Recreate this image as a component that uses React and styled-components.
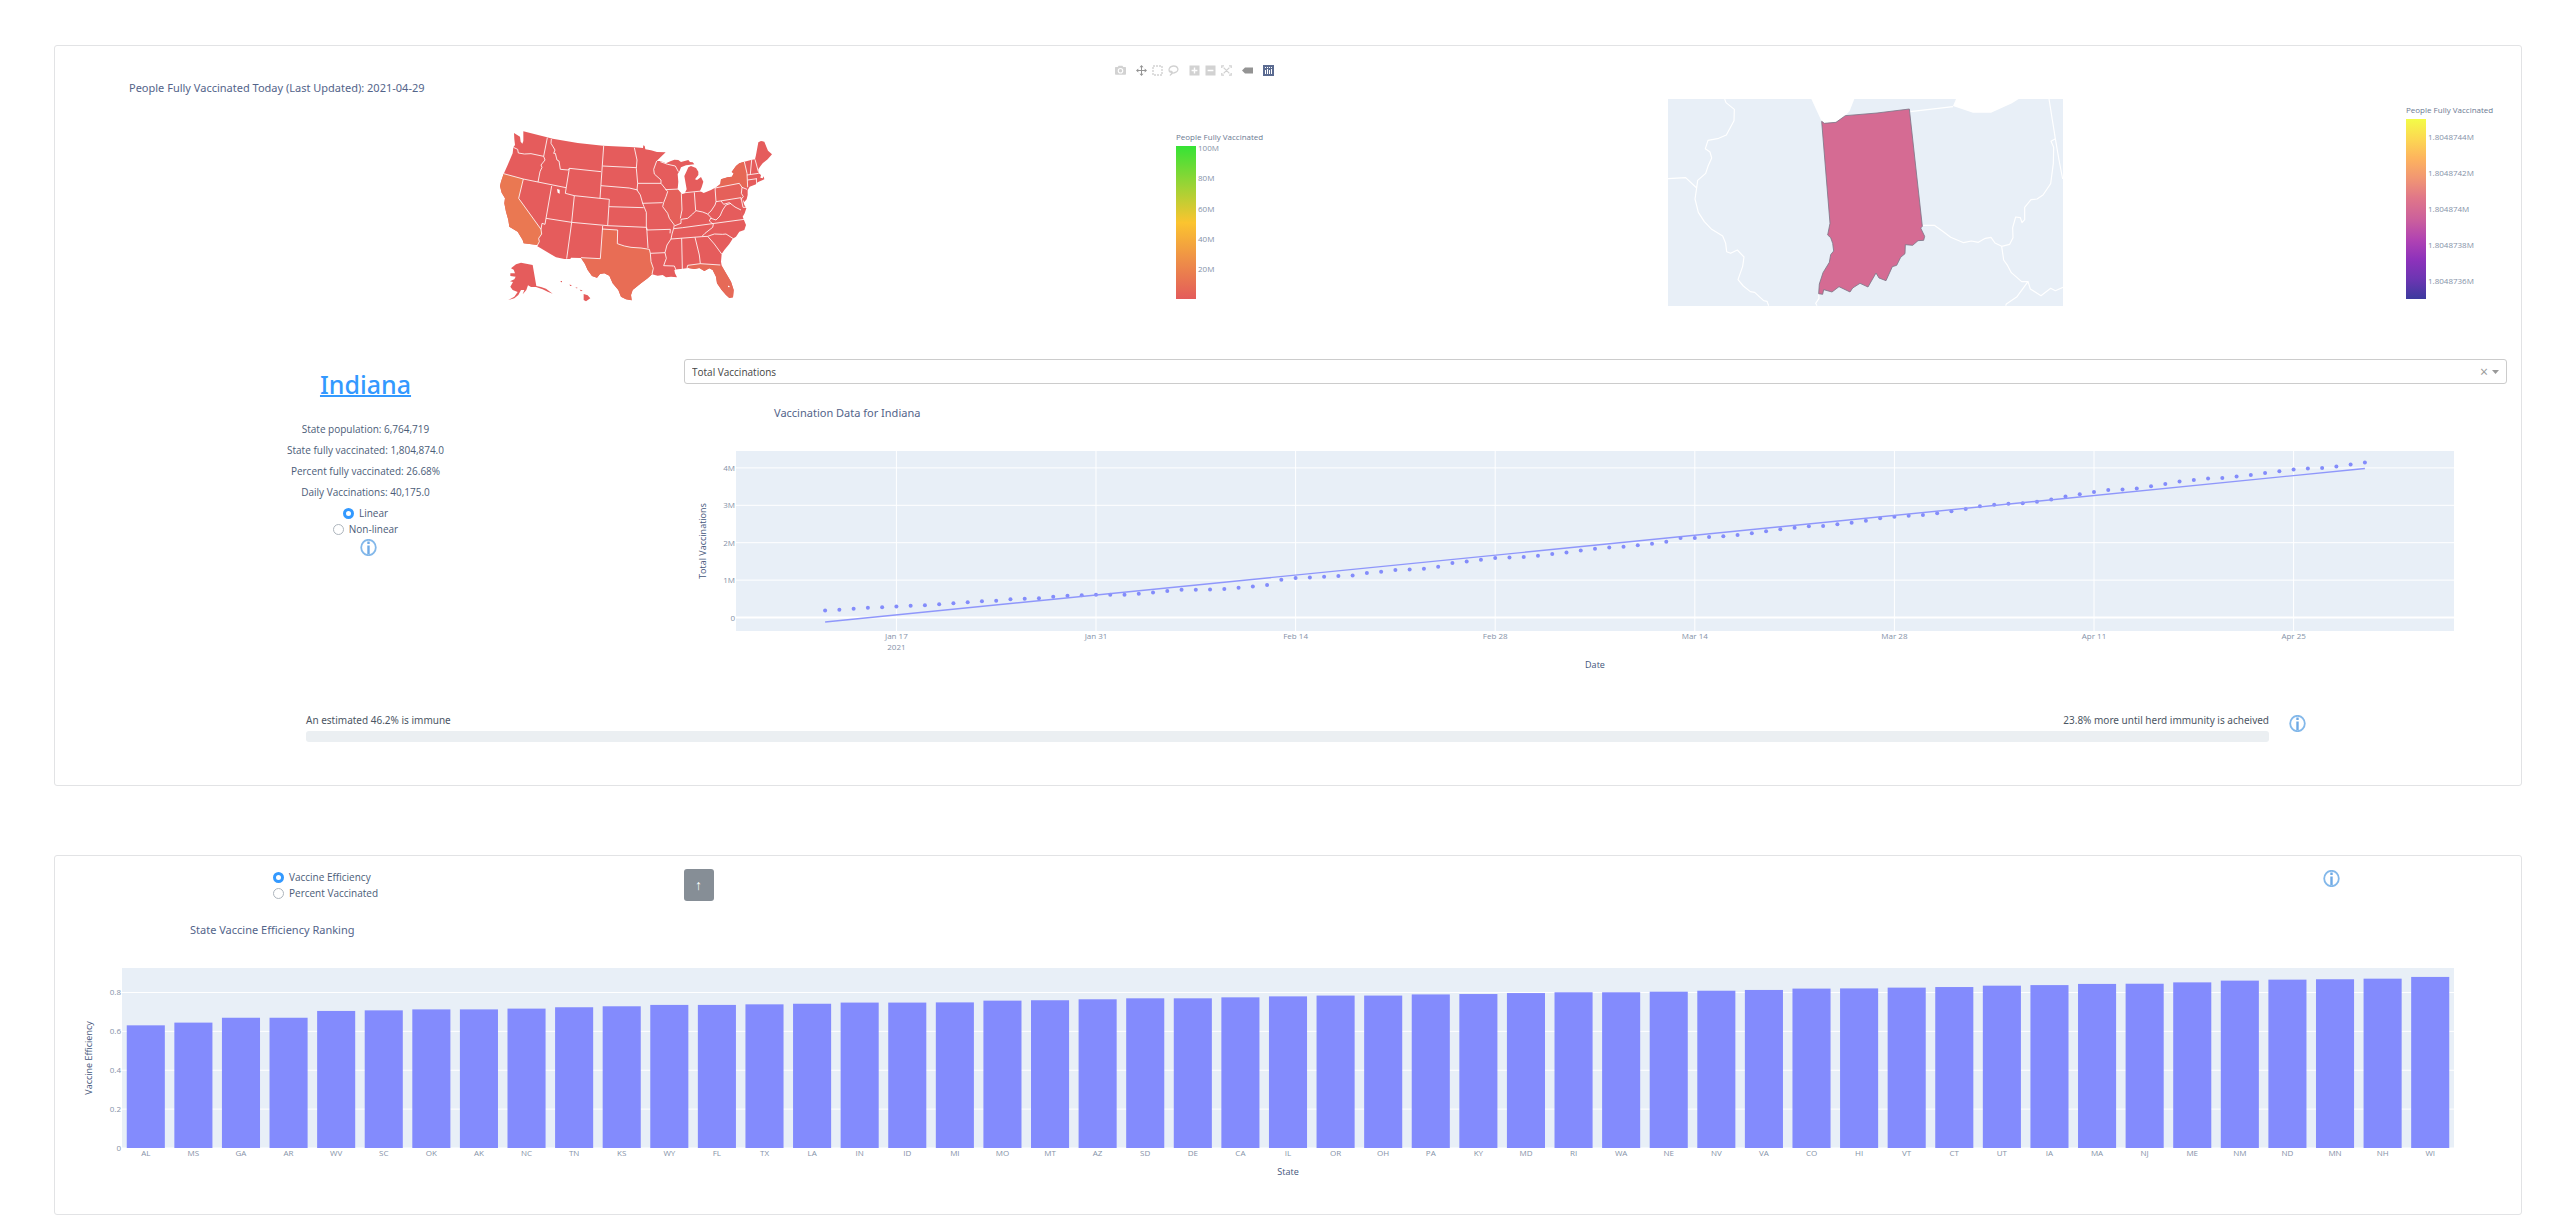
import React, { useState } from "react";
import styled, { createGlobalStyle, css } from "styled-components";

const GlobalStyle = createGlobalStyle`
  * { box-sizing: border-box; }
  body {
    margin: 0;
    background: #fff;
    color: #4b5c78;
    font-family: "Open Sans", "Noto Sans", sans-serif;
    font-size: 11px;
    line-height: 16px;
  }
`;

/* ---------- layout ---------- */

const Page = styled.main`
  display: flex;
  flex-direction: column;
  gap: 69px;
  padding: 45px 28px 8px 54px;
`;

const Card = styled.section`
  border: 1px solid #e2e3e5;
  border-radius: 3px;
  background: #fff;
`;

const MapRow = styled.div`
  display: grid;
  grid-template-columns: 1fr 1fr;
`;

const MapFigure = styled.div`
  display: flex;
  flex-direction: column;
  padding-top: ${(p) => p.$top}px;
`;

const MapHeader = styled.header`
  display: flex;
  justify-content: space-between;
  align-items: flex-start;
  height: 48px;
  padding: 0 12px 0 74px;
`;

const FigureTitle = styled.h3`
  margin: 0;
  font-family: "Noto Sans", "Open Sans", sans-serif;
  font-size: 11px;
  font-weight: 400;
  line-height: 16px;
  color: #53648a;
  padding: ${(p) => p.$pad || "0"};
`;

const MapBody = styled.div`
  display: flex;
`;

const MapArea = styled.div`
  flex: 1;
  display: flex;
  justify-content: center;
  padding: ${(p) => p.$pad};
`;

const ScaleColumn = styled.aside`
  width: ${(p) => p.$width}px;
  padding-top: ${(p) => p.$top}px;
`;

const ScaleTitle = styled.div`
  font-size: 8px;
  line-height: 10px;
  margin-bottom: 4px;
  color: #6c7a92;
  white-space: nowrap;
`;

const Drawing = styled.svg`
  display: block;
  overflow: visible;
`;

const StateRow = styled.div`
  display: grid;
  grid-template-columns: 25% 1fr;
  column-gap: 16px;
  padding-right: 14px;
  margin-top: 39px;
`;

const StatePanel = styled.div`
  display: flex;
  flex-direction: column;
  align-items: center;
  padding: 7px 0 0 8px;
`;

const StateName = styled.h2`
  margin: 0 0 19px;
  font-family: "Noto Sans", "Open Sans", sans-serif;
  font-size: 25px;
  font-weight: 500;
  line-height: 36px;
`;

const StateLink = styled.a`
  color: #3399ff;
  text-decoration: underline;
  text-decoration-thickness: 2px;
`;

const Fact = styled.p`
  margin: 0 0 5px;
  font-size: 10px;
  line-height: 16px;
`;

const RadioSet = styled.fieldset`
  display: flex;
  flex-direction: column;
  align-items: ${(p) => p.$align};
  margin: 0;
  padding: 0 0 0 ${(p) => p.$indent || 0}px;
  border: 0;
  min-width: 0;
`;

const RadioLabel = styled.label`
  display: flex;
  align-items: center;
  gap: 5px;
  height: 16px;
  font-size: 10px;
`;

const RadioInput = styled.input`
  appearance: none;
  width: 11px;
  height: 11px;
  margin: 0;
  border: 1px solid #adb5bd;
  border-radius: 50%;
  background: #fff;
  &:checked {
    border: 3px solid #3399ff;
  }
`;

const InfoButton = styled.button`
  display: block;
  width: 17px;
  height: 17px;
  padding: 0;
  border: 0;
  background: none;
  margin: ${(p) => p.$margin || "0"};
`;

const SelectBox = styled.div`
  display: flex;
  align-items: center;
  height: 25px;
  padding-right: 6px;
  border: 1px solid #ccc;
  border-radius: 3px;
`;

const Select = styled.select`
  flex: 1;
  height: 23px;
  padding: 0 7px;
  border: 0;
  appearance: none;
  background: none;
  font: inherit;
  font-size: 10px;
  color: #444;
`;

const ClearButton = styled.button`
  width: 12px;
  height: 16px;
  padding: 0;
  border: 0;
  background: none;
  color: #999;
  font: inherit;
  font-size: 14px;
  line-height: 16px;
`;

const PlotFrame = styled.div`
  padding: ${(p) => p.$pad};
`;

const PlotSvg = styled.svg`
  display: block;
  width: 100%;
  height: ${(p) => p.$height}px;
  overflow: visible;
`;

const labelFont = css`
  font-family: "Open Sans", "Noto Sans", sans-serif;
`;

const Tick = styled.text`
  ${labelFont}
  font-size: 8px;
  fill: #8592a8;
`;

const AxisTitle = styled.text`
  ${labelFont}
  font-size: 9px;
  fill: #43557a;
  text-anchor: middle;
`;

const ImmunityRow = styled.div`
  display: flex;
  gap: 20px;
  padding: 0 215px 43px 251px;
`;

const Immunity = styled.div`
  flex: 1;
`;

const ImmunityText = styled.div`
  display: flex;
  justify-content: space-between;
  height: 20px;
  padding-top: 1px;
  font-family: "Noto Sans", "Open Sans", sans-serif;
  font-size: 10px;
  color: #4b5563;
`;

const Track = styled.div`
  height: 11px;
  border-radius: 3px;
  background: #ebeff2;
`;

const RankingControls = styled.div`
  display: grid;
  grid-template-columns: 25% auto 1fr;
  column-gap: 12px;
  padding-top: 13px;
`;

const SortButton = styled.button`
  width: 30px;
  height: 32px;
  padding: 0;
  border: 0;
  border-radius: 3px;
  background: #868e96;
  color: #fff;
  font: inherit;
  font-size: 14px;
`;

/* ---------- modebar ---------- */

const Modebar = styled.div`
  display: flex;
  gap: 5px;
`;

const ModeGroup = styled.div`
  display: flex;
`;

const ModeButton = styled.button`
  display: flex;
  align-items: center;
  justify-content: center;
  width: 16px;
  height: 16px;
  padding: 0;
  border: 0;
  background: none;
  color: ${(p) => (p.$active ? "#949494" : "#d2d2d2")};
`;

const MODE_ICONS = {
  camera: (
    <path
      fillRule="evenodd"
      fill="currentColor"
      d="M0 2.6Q0 2 .8 2H2.7L3.6.8H7.4L8.3 2H10.2Q11 2 11 2.6V9Q11 9.8 10.2 9.8H.8Q0 9.8 0 9ZM5.5 3A2.8 2.8 0 1 0 5.5 8.6A2.8 2.8 0 1 0 5.5 3ZM5.5 4.1A1.7 1.7 0 1 1 5.5 7.5A1.7 1.7 0 1 1 5.5 4.1Z"
    />
  ),
  pan: (
    <path
      fill="currentColor"
      d="M5.5 0 7.5 2.3H6V5H8.7V3.5L11 5.5 8.7 7.5V6H6V8.7H7.5L5.5 11 3.5 8.7H5V6H2.3V7.5L0 5.5 2.3 3.5V5H5V2.3H3.5Z"
    />
  ),
  box: (
    <rect x="1" y="1" width="9" height="9" fill="none" stroke="currentColor" strokeWidth="1.4" strokeDasharray="2 1" />
  ),
  lasso: (
    <path
      fill="none"
      stroke="currentColor"
      strokeWidth="1.3"
      d="M2.2 7.2C-.2 5 1.4 1 5.8 1S11.2 5.6 8 7.2 3.2 7.8 2.4 6.8 4.8 6.2 4.2 8 2.4 9 2.2 10.6"
    />
  ),
  zoomIn: (
    <path fillRule="evenodd" fill="currentColor" d="M.5.5H10.5V10.5H.5ZM4.8 2.6V4.8H2.6V6.2H4.8V8.4H6.2V6.2H8.4V4.8H6.2V2.6Z" />
  ),
  zoomOut: <path fillRule="evenodd" fill="currentColor" d="M.5.5H10.5V10.5H.5ZM2.6 4.8V6.2H8.4V4.8Z" />,
  autoscale: (
    <path
      fill="none"
      stroke="currentColor"
      strokeWidth="1.3"
      d="M3 .8H.8V3M8 .8H10.2V3M3 10.2H.8V8M8 10.2H10.2V8M2.6 2.6 8.4 8.4M8.4 2.6 2.6 8.4"
    />
  ),
  hover: <path fill="currentColor" d="M0 5.5 3 2.6H11V8.4H3Z" />,
  logo: (
    <g>
      <rect width="11" height="11" fill="#5b6b91" />
      <path
        stroke="#fff"
        strokeWidth="1"
        d="M2.5 5V9M4.5 4V9M6.5 5V9M8.5 4V9M2.5 2V3M4.5 2V3M6.5 2V3M8.5 2V3"
      />
    </g>
  ),
};

const MODE_GROUPS = [
  [["camera", "Download plot as a png"]],
  [["pan", "Pan"], ["box", "Box Select"], ["lasso", "Lasso Select"]],
  [["zoomIn", "Zoom in"], ["zoomOut", "Zoom out"], ["autoscale", "Reset"]],
  [["hover", "Toggle show closest data on hover"]],
  [["logo", "Produced with Plotly"]],
];

function PlotModebar() {
  return (
    <Modebar>
      {MODE_GROUPS.map((group) => (
        <ModeGroup key={group[0][0]}>
          {group.map(([name, label]) => (
            <ModeButton key={name} aria-label={label} $active={name === "pan" || name === "hover"}>
              <svg width="11" height="11" viewBox="0 0 11 11">
                {MODE_ICONS[name]}
              </svg>
            </ModeButton>
          ))}
        </ModeGroup>
      ))}
    </Modebar>
  );
}

/* ---------- colour scales ---------- */

const NATION_SCALE = {
  id: "nationScale",
  height: 153,
  stops: [["0%", "#35e335"], ["25%", "#98d435"], ["50%", "#fbc42f"], ["75%", "#ee8e48"], ["100%", "#e35b5b"]],
  ticks: [["100M", 2], ["80M", 32], ["60M", 63], ["40M", 93], ["20M", 123]],
};

const STATE_SCALE = {
  id: "stateScale",
  height: 180,
  stops: [
    ["0%", "#f3fc48"],
    ["11%", "#fcd852"],
    ["22%", "#fdb35e"],
    ["33%", "#f19673"],
    ["44%", "#e07689"],
    ["56%", "#cb5f9c"],
    ["67%", "#b143b2"],
    ["78%", "#8e32bb"],
    ["89%", "#6c35b2"],
    ["100%", "#3c3a9e"],
  ],
  ticks: [["1.8048744M", 18], ["1.8048742M", 54], ["1.804874M", 90], ["1.8048738M", 126], ["1.8048736M", 162]],
};

function ColorScale({ scale, width, top }) {
  return (
    <ScaleColumn $width={width} $top={top}>
      <ScaleTitle>People Fully Vaccinated</ScaleTitle>
      <Drawing width="90" height={scale.height}>
        <defs>
          <linearGradient id={scale.id} x1="0" y1="0" x2="0" y2="1">
            {scale.stops.map(([offset, color]) => (
              <stop key={offset} offset={offset} stopColor={color} />
            ))}
          </linearGradient>
        </defs>
        <rect width="20" height={scale.height} fill={`url(#${scale.id})`} />
        {scale.ticks.map(([label, y]) => (
          <Tick key={label} x="22" y={y + 3}>
            {label}
          </Tick>
        ))}
      </Drawing>
    </ScaleColumn>
  );
}

/* ---------- maps ---------- */

const NATION_OUTLINE =
  "M99,69L117,80 119,95 124,101 127,93 127,64 198,82 215,86 290,99 366,107 460,112 486,114 487,106 491,108 493,118 510,121 528,126 554,127 540,140 527,153 538,153 555,160 568,154 580,149 592,150 600,156 622,150 627,156 635,157 640,163 615,166 600,172 596,182 590,192 592,215 590,237 595,247 603,252 611,250 617,238 613,215 610,198 616,185 622,172 630,168 645,174 652,185 652,195 642,208 648,210 660,201 667,215 662,232 657,243 668,249 690,240 705,232 718,222 720,208 740,202 753,200 758,190 752,186 765,168 775,160 790,155 810,150 822,148 825,135 832,97 840,93 850,95 856,110 861,122 873,133 860,148 845,160 837,170 832,178 833,190 840,195 838,203 845,205 848,199 850,208 840,212 830,217 825,223 806,230 800,240 800,255 797,268 790,276 785,268 790,285 796,295 791,310 785,320 777,297 783,315 788,328 795,345 790,360 775,365 765,380 755,386 745,402 730,420 722,432 720,455 722,467 735,490 750,515 758,540 756,562 745,564 735,555 722,540 708,520 705,500 695,480 685,475 670,483 655,474 640,477 622,474 605,476 590,478 580,480 582,490 588,502 570,500 555,502 545,495 530,497 513,493 500,505 480,520 455,540 450,555 452,571 435,568 420,560 412,540 395,520 385,497 370,490 357,492 348,503 333,498 320,480 312,462 300,444 270,443 268,447 250,447 225,442 168,408 170,405 128,400 125,390 110,365 85,350 82,330 75,305 70,280 72,265 62,248 57,228 60,215 68,192 80,165 95,130 97,112 102,105 100,88Z";

const NATION_TINTED = [
  ["#ea7852", "M68,191L127,207 113,265 180,358 182,372 173,385 175,395 168,408 170,405 128,400 125,390 110,365 85,350 82,330 75,305 70,280 72,265 62,248 57,228 60,215Z"],
  ["#e86d55", "M363,357L410,360 409,401 430,408 450,412 480,414 505,418 508,430 510,455 517,475 513,493 500,505 480,520 455,540 450,555 452,571 435,568 420,560 412,540 395,520 385,497 370,490 357,492 348,503 333,498 320,480 312,462 300,444 358,446Z"],
  ["#e66a57", "M620,466L658,461 718,465 722,467 735,490 750,515 758,540 756,562 745,564 735,555 722,540 708,520 705,500 695,480 685,475 670,483 655,474 640,477 622,474Z"],
  ["#e66855", "M718,222L720,208 740,202 753,200 758,190 752,186 765,168 775,160 790,155 798,190 800,232 783,232 775,220 710,231Z"],
  ["#e5605a", "M553,239L590,237 601,250 603,300 598,330 580,347 565,325 545,290 548,278 560,245Z"],
  ["#e5605a", "M705,232L775,220 785,235 783,263 705,275Z"],
];

const NATION_BORDERS =
  "M97,112L110,118 112,129 130,132 150,131 188,139M199,83L188,139 192,150 180,165 183,172 177,185 171,216M68,191L127,207 171,216 255,233M211,87L210,100 222,120 218,130 223,130 228,150 234,153 238,178 262,180 265,175 360,185M265,175L253,250 280,257 385,268M368,108L357,265M365,168L466,173M360,227L445,234 470,240M385,268L380,347M384,290L488,293M280,257L272,337 257,446M212,228L195,325 272,337 380,347 496,352M127,207L113,265 180,358 182,372 173,385 175,395 168,408M195,325L192,343 183,340 180,358M365,348L358,446 300,443M363,357L410,360 409,401 430,408 450,412 480,414 505,418 508,430 510,455 517,475 513,493M497,352L501,414M508,430L552,428M460,113L468,150 466,175 470,220 468,240 478,255 485,280 496,307 496,352 498,360 568,358 567,370M470,220L540,220M484,280L545,278M527,153L518,178 520,192 540,210 540,220 560,245 555,260 548,278 545,290 560,310 565,325 580,345 578,355 573,372 570,387 558,405 552,428 556,445 548,467 580,468 585,480M538,155L560,163 583,168 592,185M553,239L595,237M601,250L603,300 598,325M640,247L644,302M603,249L662,243M582,347L600,340 600,328 620,325 635,312 645,302 665,306 680,312 690,303 702,285 705,275 702,232M680,312L690,323 685,333 697,343M690,325L705,330 717,318 725,300 735,285 750,280M705,275L780,263 786,292 795,292M702,234L775,220 783,232 798,238M783,232L781,250 787,260 780,268M790,155L798,190 800,232M812,150L808,192M822,148L832,185M798,195L833,190M800,210L828,206M826,206L827,222M720,273L728,283 745,278 762,291 780,300M578,356L605,353 790,328M570,387L662,380 680,379 700,372 725,373 735,372 757,386M697,343L695,352 672,370 663,379M680,379L700,402 722,432M602,385L604,477M642,382L655,435 658,461 718,465M618,475L620,466 658,461";

const ALASKA_HAWAII =
  "M105,463L120,458 155,465 166,528 180,531 195,536 215,551 200,545 185,538 165,531 150,531 141,526 136,540 125,553 130,540 120,540 112,555 100,565 82,570 100,560 110,546 95,540 88,530 96,516 87,514 100,508 104,500 88,498 88,490 102,490 98,479 90,475ZM308,552L320,556 328,565 315,574 308,570ZM296,539L305,541 300,544ZM284,532L291,534 285,535ZM266,523L273,528 267,528ZM239,513L243,513 243,517 239,516Z";

function NationMap() {
  return (
    <Drawing width="310" height="210" viewBox="0 0 930 630" role="img" aria-label="Vaccinations by state">
      <path d={NATION_OUTLINE} fill="#e55c5c" />
      {NATION_TINTED.map(([fill, d]) => (
        <path key={d} d={d} fill={fill} />
      ))}
      <path d={NATION_BORDERS} fill="none" stroke="#fff" strokeWidth="2.5" strokeLinejoin="round" />
      <path d={ALASKA_HAWAII} fill="#e55c5c" />
      <path d="M228,237L236,239 236,251 230,248ZM741,527L746,528 745,532 741,531Z" fill="#fff" />
    </Drawing>
  );
}

const NEIGHBOUR_BORDERS =
  "M223,57L227,68 252,88 251,122 228,165 205,175 173,181 165,206 179,216 184,234 173,259 166,280 142,301 139,324 134,357 144,397 162,425 184,448 217,468 226,490 229,515 241,520 261,510 281,531 277,559 263,599 279,618 300,635 313,637 340,662 350,664 355,677M53,296L106,293 139,324M780,95L908,80M1196,57L1215,176 1202,184 1210,202 1209,250 1201,311 1178,345 1160,357 1142,359 1123,382 1123,419 1115,428 1110,413 1096,411 1087,443 1088,473 1078,493 1054,499 1034,489 1022,472 1005,475 984,487 963,483 940,488 901,472 875,452 852,436 818,436M1215,176L1226,240 1237,297M1054,499L1060,540 1072,557 1083,578 1114,605 1133,605 1100,650 1068,672 1066,677M1133,605L1140,627 1172,647 1201,625 1215,632 1238,622M505,643L506,655 496,670 500,677";

const INDIANA =
  "M514,124L522,130 557,127 585,107 680,99 777,87 816,439 811,444 823,469 820,481 803,482 787,496 765,494 764,521 751,532 739,556 726,560 707,602 686,594 677,579 653,621 629,610 607,624 599,636 566,620 545,636 520,629 517,643 505,641 507,612 518,578 537,547 541,524 550,513 547,490 541,473 532,465 539,430Z";

function IndianaMap() {
  return (
    <svg width="395" height="207" viewBox="53 57 1185 621" role="img" aria-label="Indiana">
      <rect x="53" y="57" width="1185" height="621" fill="#e8eff7" />
      <path d="M483,57L513,122 522,130 557,127 585,107 598,93 612,57ZM917,57L908,78 968,98 1022,98 1085,70 1105,57Z" fill="#fff" />
      <path d={NEIGHBOUR_BORDERS} fill="none" stroke="#fff" strokeWidth="3.5" strokeLinejoin="round" />
      <path d={INDIANA} fill="#d56b93" stroke="#7d7688" strokeWidth="2.5" />
    </svg>
  );
}

/* ---------- line chart ---------- */

const DOSE_UNITS_PER_MILLION = 112;
const DOSES = [
  21, 23, 26, 29, 31, 33, 35, 37, 40, 43, 46, 49, 50, 55, 56, 58, 62, 65, 67, 68, 68, 68, 71, 75, 79, 83, 83, 84, 85,
  89, 93, 97, 113, 118, 120, 122, 124, 126, 133, 137, 142, 144, 146, 152, 163, 168, 173, 178, 180, 181, 185, 190, 195,
  201, 206, 210, 212, 216, 221, 227, 238, 238, 241, 243, 247, 252, 258, 264, 269, 273, 274, 279, 284, 290, 297, 302,
  305, 307, 312, 318, 325, 333, 338, 341, 342, 347, 353, 362, 369, 376, 382, 383, 386, 393, 400, 407, 412, 416, 418,
  422, 427, 433, 438, 443, 446, 448, 452, 458, 464,
];
const WEEKS = ["Jan 17", "Jan 31", "Feb 14", "Feb 28", "Mar 14", "Mar 28", "Apr 11", "Apr 25"];
const DAYS_SHOWN = 120.5;
const FIRST_DAY = 6.25;

const dayX = (day) => `${((day + FIRST_DAY) / DAYS_SHOWN) * 100}%`;
const doseY = (millions) => 166.5 - millions * 37.4;

function VaccinationChart() {
  return (
    <PlotSvg $height={180} role="img" aria-label="Vaccination data">
      <rect width="100%" height="180" fill="#e8eff7" />
      {WEEKS.map((week, i) => (
        <g key={week}>
          <line x1={dayX(5 + i * 14)} x2={dayX(5 + i * 14)} y1="0" y2="180" stroke="#fff" />
          <Tick x={dayX(5 + i * 14)} y="188" textAnchor="middle">
            {week}
          </Tick>
        </g>
      ))}
      <Tick x={dayX(5)} y="199" textAnchor="middle">
        2021
      </Tick>
      {[0, 1, 2, 3, 4].map((m) => (
        <g key={m}>
          <line x1="0" x2="100%" y1={doseY(m)} y2={doseY(m)} stroke="#fff" strokeWidth={m ? 1 : 2} />
          <Tick x="-1" y={doseY(m) + 3} textAnchor="end">
            {m ? `${m}M` : "0"}
          </Tick>
        </g>
      ))}
      {DOSES.map((n, day) => (
        <circle key={day} cx={dayX(day)} cy={doseY(n / DOSE_UNITS_PER_MILLION)} r="2" fill="#838cfb" />
      ))}
      <line x1={dayX(0)} y1="171" x2={dayX(108)} y2="17.5" stroke="#8f97fb" strokeWidth="1.4" />
      <AxisTitle x="50%" y="217">
        Date
      </AxisTitle>
      <AxisTitle transform="translate(-30 90) rotate(-90)">Total Vaccinations</AxisTitle>
    </PlotSvg>
  );
}

/* ---------- bar chart ---------- */

const RANKING = [
  ["AL", 0.631], ["MS", 0.645], ["GA", 0.67], ["AR", 0.67], ["WV", 0.705], ["SC", 0.708], ["OK", 0.713],
  ["AK", 0.713], ["NC", 0.717], ["TN", 0.724], ["KS", 0.729], ["WY", 0.736], ["FL", 0.736], ["TX", 0.739],
  ["LA", 0.742], ["IN", 0.748], ["ID", 0.748], ["MI", 0.749], ["MO", 0.758], ["MT", 0.76], ["AZ", 0.765],
  ["SD", 0.77], ["DE", 0.77], ["CA", 0.775], ["IL", 0.78], ["OR", 0.784], ["OH", 0.784], ["PA", 0.79],
  ["KY", 0.792], ["MD", 0.797], ["RI", 0.801], ["WA", 0.801], ["NE", 0.804], ["NV", 0.809], ["VA", 0.813],
  ["CO", 0.82], ["HI", 0.821], ["VT", 0.825], ["CT", 0.828], ["UT", 0.835], ["IA", 0.838], ["MA", 0.844],
  ["NJ", 0.845], ["ME", 0.852], ["NM", 0.861], ["ND", 0.866], ["MN", 0.868], ["NH", 0.871], ["WI", 0.88],
];
const SLOT = 100 / RANKING.length;

function RankingChart() {
  return (
    <PlotSvg $height={180} role="img" aria-label="State ranking">
      <rect width="100%" height="180" fill="#e8eff7" />
      {[0, 0.2, 0.4, 0.6, 0.8].map((v) => (
        <g key={v}>
          <line x1="0" x2="100%" y1={180 - v * 194.4} y2={180 - v * 194.4} stroke="#fff" />
          <Tick x="-1" y={183 - v * 194.4} textAnchor="end">
            {v}
          </Tick>
        </g>
      ))}
      {RANKING.map(([state, value], i) => (
        <g key={state}>
          <rect
            x={`${(i + 0.1) * SLOT}%`}
            y={180 - value * 194.4}
            width={`${SLOT * 0.8}%`}
            height={value * 194.4}
            fill="#838bfd"
          />
          <Tick x={`${(i + 0.5) * SLOT}%`} y="188" textAnchor="middle">
            {state}
          </Tick>
        </g>
      ))}
      <AxisTitle x="50%" y="207">
        State
      </AxisTitle>
      <AxisTitle transform="translate(-30 90) rotate(-90)">Vaccine Efficiency</AxisTitle>
    </PlotSvg>
  );
}

/* ---------- small parts ---------- */

function Info({ label, margin }) {
  return (
    <InfoButton aria-label={label} $margin={margin}>
      <svg width="17" height="17" viewBox="0 0 17 17">
        <ellipse cx="8.5" cy="8.5" rx="7.3" ry="7.7" fill="none" stroke="#83b8ea" strokeWidth="1.8" />
        <path d="M8.5 2.6V5M8.5 6.4V15" fill="none" stroke="#6faae6" strokeWidth="2.4" />
      </svg>
    </InfoButton>
  );
}

function Radios({ name, options, align, indent }) {
  const [value, setValue] = useState(options[0]);
  return (
    <RadioSet $align={align} $indent={indent}>
      {options.map((option) => (
        <RadioLabel key={option}>
          <RadioInput type="radio" name={name} checked={value === option} onChange={() => setValue(option)} />
          {option}
        </RadioLabel>
      ))}
    </RadioSet>
  );
}

const FACTS = [
  "State population: 6,764,719",
  "State fully vaccinated: 1,804,874.0",
  "Percent fully vaccinated: 26.68%",
  "Daily Vaccinations: 40,175.0",
];

export default function App() {
  return (
    <>
      <GlobalStyle />
      <Page>
        <Card>
          <MapRow>
            <MapFigure $top={16}>
              <MapHeader>
                <FigureTitle $pad="18px 0 0">People Fully Vaccinated Today (Last Updated): 2021-04-29</FigureTitle>
                <PlotModebar />
              </MapHeader>
              <MapBody>
                <MapArea $pad="0 34px 0 74px">
                  <NationMap />
                </MapArea>
                <ColorScale scale={NATION_SCALE} width={112} top={22} />
              </MapBody>
            </MapFigure>
            <MapFigure $top={53}>
              <MapBody>
                <MapArea $pad="0 0 0 36px">
                  <IndianaMap />
                </MapArea>
                <ColorScale scale={STATE_SCALE} width={115} top={6} />
              </MapBody>
            </MapFigure>
          </MapRow>

          <StateRow>
            <StatePanel>
              <StateName>
                <StateLink href="#indiana">Indiana</StateLink>
              </StateName>
              {FACTS.map((fact) => (
                <Fact key={fact}>{fact}</Fact>
              ))}
              <Radios name="model" options={["Linear", "Non-linear"]} align="center" />
              <Info label="About the model" margin="2px 0 0 6px" />
            </StatePanel>
            <div>
              <SelectBox>
                <Select aria-label="Statistic" defaultValue="total">
                  <option value="total">Total Vaccinations</option>
                  <option value="daily">Daily Vaccinations</option>
                </Select>
                <ClearButton aria-label="Clear value">×</ClearButton>
                <svg width="10" height="4" viewBox="0 0 10 4">
                  <path d="M2 0H9L5.5 4Z" fill="#999" />
                </svg>
              </SelectBox>
              <FigureTitle $pad="21px 0 30px 90px">Vaccination Data for Indiana</FigureTitle>
              <PlotFrame $pad="0 53px 80px 52px">
                <VaccinationChart />
              </PlotFrame>
            </div>
          </StateRow>

          <ImmunityRow>
            <Immunity>
              <ImmunityText>
                <span>An estimated 46.2% is immune</span>
                <span>23.8% more until herd immunity is acheived</span>
              </ImmunityText>
              <Track />
            </Immunity>
            <Info label="About herd immunity" margin="4px 0 0" />
          </ImmunityRow>
        </Card>

        <Card>
          <RankingControls>
            <Radios name="ranking" options={["Vaccine Efficiency", "Percent Vaccinated"]} align="flex-start" indent={218} />
            <SortButton aria-label="Sort ascending">↑</SortButton>
            <Info label="About the ranking" margin="1px 181px 0 auto" />
          </RankingControls>
          <FigureTitle $pad="21px 0 30px 135px">State Vaccine Efficiency Ranking</FigureTitle>
          <PlotFrame $pad="0 67px 66px">
            <RankingChart />
          </PlotFrame>
        </Card>
      </Page>
    </>
  );
}
